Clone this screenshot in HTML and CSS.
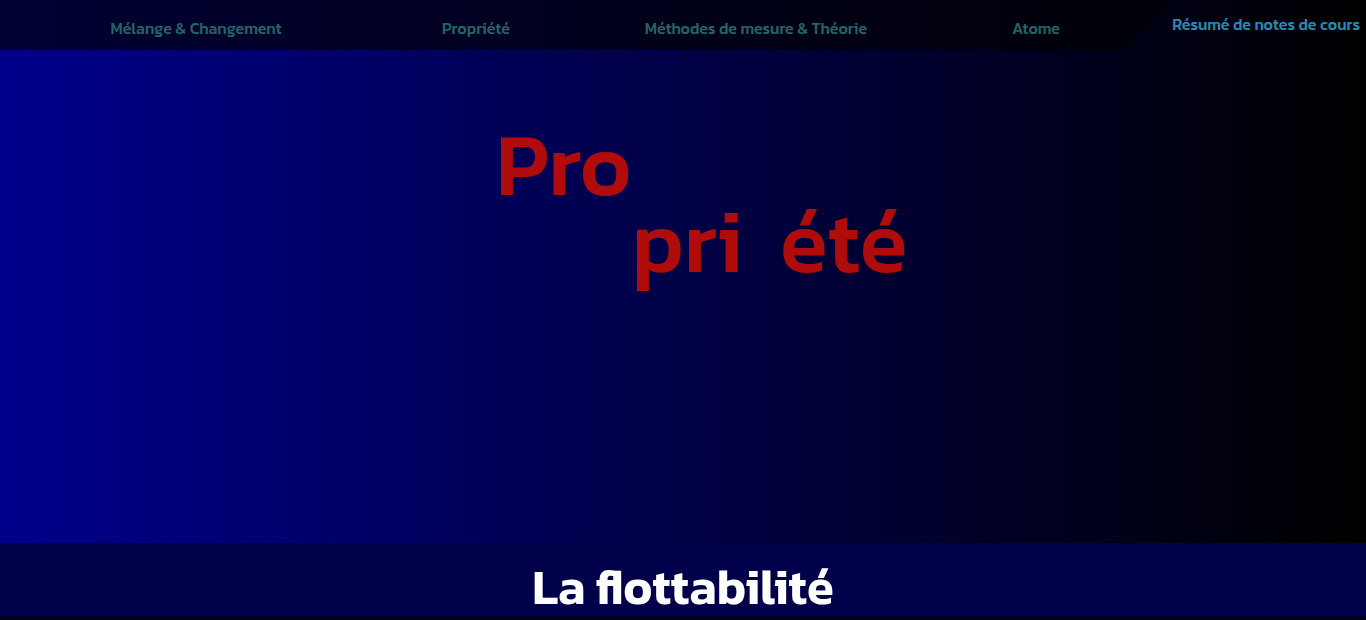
FILE: index.html
```html
<!DOCTYPE html>
<html lang="fr">
<head>
<meta charset="utf-8">
<title>Propriété</title>
<link rel="stylesheet" href="styles.css">
</head>
<body>
<div class="hero">
  <header class="header">
    <nav class="nav">
      <a href="#">Mélange &amp; Changement</a>
      <a href="#">Propriété</a>
      <a href="#">Méthodes de mesure &amp; Théorie</a>
      <a href="#">Atome</a>
    </nav>
    <a class="brand" href="#">Résumé de notes de cours</a>
  </header>
  <h1 class="title">
    <span class="first">Pro</span>
    <span class="second">pri</span>
    <span class="third">été</span>
  </h1>
</div>
<main>
  <h2 class="section-title">La flottabilité</h2>
</main>
</body>
</html>
```

FILE: styles.css
```css
* {
  box-sizing: border-box;
}

body {
  margin: 0;
  background: #000022;
  font-family: Kanit, "Open Sans", sans-serif;
}

.hero {
  min-height: 543px;
  background: linear-gradient(to right, #00008b, #000000);
}

.header {
  display: flex;
  height: 50px;
}

.nav {
  display: grid;
  flex: none;
  grid-template-columns: repeat(4, 1fr);
  width: calc(100% - 190px);
  padding: 6px 0 0 56px;
  align-items: center;
  justify-items: center;
  background: rgba(0, 0, 0, 0.63);
  clip-path: polygon(0 0, 100% 0, calc(100% - 52px) 100%, 0 100%);
}

.nav a,
.brand {
  font-size: 16px;
  font-weight: 500;
  line-height: 24px;
  white-space: nowrap;
  text-decoration: none;
}

.nav a {
  color: #246464;
}

.brand {
  flex: 1;
  min-width: 0;
  padding: 12px 6px 0 0;
  display: flex;
  justify-content: flex-end;
  color: #2a8ab4;
}

.title {
  display: grid;
  grid-template-columns: 136px 148px 128px;
  justify-content: center;
  margin: 0;
  padding: 76px 0 0 38px;
  color: #b00c0c;
  font-size: 88px;
  font-weight: 500;
  line-height: 77px;
}

.second,
.third {
  grid-row: 2;
}

.second {
  grid-column: 2;
}

.third {
  grid-column: 3;
}

.section-title {
  margin: 0;
  padding: 14px 0 0;
  background: #00004a;
  color: #ffffff;
  font-size: 49px;
  font-weight: 600;
  line-height: 59px;
  text-align: center;
}
```
